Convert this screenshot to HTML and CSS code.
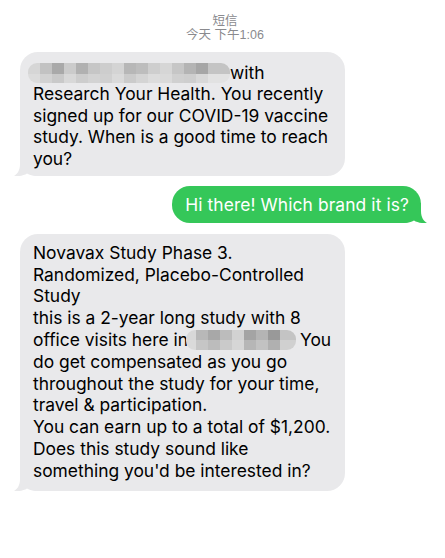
FILE: index.html
```html
<!doctype html>
<html>
    <head>
        <meta charset="utf-8">
        <link rel="stylesheet" href="styles.css">
    </head>
    <body>
        <div id="thread">
            <div class="stamp">
                <div>短信</div>
                <div>今天 下午1:06</div>
            </div>

            <!-- Incoming -->
            <div class="row in">
                <div class="bubble grey first">
                    <span class="redact redact-name"></span>with<br>
                    Research Your Health. You recently<br>
                    signed up for our COVID-19 vaccine<br>
                    study. When is a good time to reach<br>
                    you?
                    <svg class="tail" viewBox="0 0 24 20" width="24" height="20"><path d="M6 0 V8 C6 15 3 18 0 20 C5 20.5 10 19.5 13 17.5 C15.5 19 18.5 20 24 20 V0 Z"/></svg>
                </div>
            </div>

            <!-- Outgoing -->
            <div class="row out">
                <div class="bubble green">
                    Hi there! Which brand it is?
                    <svg class="tail" viewBox="0 0 24 20" width="24" height="20"><path d="M6 0 V8 C6 15 3 18 0 20 C5 20.5 10 19.5 13 17.5 C15.5 19 18.5 20 24 20 V0 Z"/></svg>
                </div>
            </div>

            <!-- Incoming -->
            <div class="row in">
                <div class="bubble grey">
                    Novavax Study Phase 3.<br>
                    Randomized, Placebo-Controlled<br>
                    Study<br>
                    this is a 2-year long study with 8<br>
                    office visits here in<span class="redact redact-city"></span>You<br>
                    do get compensated as you go<br>
                    throughout the study for your time,<br>
                    travel &amp; participation.<br>
                    You can earn up to a total of $1,200.<br>
                    Does this study sound like<br>
                    something you'd be interested in?
                    <svg class="tail" viewBox="0 0 24 20" width="24" height="20"><path d="M6 0 V8 C6 15 3 18 0 20 C5 20.5 10 19.5 13 17.5 C15.5 19 18.5 20 24 20 V0 Z"/></svg>
                </div>
            </div>
        </div>
    </body>
</html>
```

FILE: styles.css
```css
* {
    margin: 0;
    padding: 0;
    box-sizing: border-box;
}
body {
    background: #fff;
    font-family: Inter, "Liberation Sans", "Noto Sans CJK SC", sans-serif;
    color: #000;
}
#thread {
    display: flex;
    flex-direction: column;
    gap: 10px;
    padding: 14px 17px 0 20px;
}
.stamp {
    text-align: center;
    font-family: "Liberation Sans", "Noto Sans CJK SC", sans-serif;
    font-size: 12.5px;
    line-height: 14px;
    color: #8a8a8e;
    margin-left: 2px;
}
.row {
    display: flex;
}
.row.out {
    justify-content: flex-end;
    padding-right: 7px;
    margin-bottom: 1px;
}
.bubble {
    position: relative;
    isolation: isolate;
    font-size: 17.4px;
    line-height: 21.8px;
    padding: 8px 12px 9px 13px;
    border-radius: 18px;
    white-space: nowrap;
}
.grey {
    background: #e9e9eb;
    width: 325px;
}
.grey.first {
    line-height: 21.5px;
    padding-top: 9.5px;
    padding-bottom: 7px;
}
.green {
    background: #35c759;
    color: #fff;
    padding: 8px 12px 7px 13px;
    letter-spacing: 0.1px;
}
.tail {
    position: absolute;
    z-index: -1;
    bottom: 0;
    display: block;
}
.grey .tail {
    left: -6px;
    fill: #e9e9eb;
}
.green .tail {
    right: -6px;
    fill: #35c759;
    transform: scaleX(-1);
}
.redact {
    display: inline-block;
    height: 20px;
    vertical-align: -4px;
    border-radius: 9px;
    filter: blur(0.6px);
}
.redact-name {
    width: 202px;
    margin-left: -5px;
    background:
        linear-gradient(to right, #d6d6d6 0 12px, #c2c2c2 12px 24px, #a9a9a9 24px 36px, #cbcbcb 36px 48px, #b1b1b1 48px 60px, #c6c6c6 60px 72px, #cdcdcd 72px 84px, #d4d4d4 84px 96px, #b7b7b7 96px 108px, #bdbdbd 108px 120px, #cecece 120px 132px, #d6d6d6 132px 144px, #c6c6c6 144px 156px, #b4b4b4 156px 168px, #a6a6a6 168px 180px, #c4c4c4 180px 202px) top / 100% 55% no-repeat,
        linear-gradient(to right, #dcdcdc 0 12px, #d2d2d2 12px 24px, #c9c9c9 24px 36px, #d8d8d8 36px 48px, #cdcdcd 48px 60px, #d3d3d3 60px 72px, #d0d0d0 72px 84px, #dadada 84px 96px, #cbcbcb 96px 108px, #d4d4d4 108px 120px, #dcdcdc 120px 132px, #dadada 132px 144px, #d0d0d0 144px 156px, #cecece 156px 168px, #d8d8d8 168px 180px, #e2e2e2 180px 202px) bottom / 100% 45% no-repeat;
}
.redact-city {
    width: 110px;
    margin-left: -2px;
    margin-right: 4px;
    background:
        linear-gradient(to right, #d8d8d8 0 10px, #b8b8b8 10px 22px, #a8a8a8 22px 34px, #bcbcbc 34px 46px, #d2d2d2 46px 58px, #a4a4a4 58px 70px, #b4b4b4 70px 82px, #999 82px 94px, #c4c4c4 94px 110px) top / 100% 50% no-repeat,
        linear-gradient(to right, #dadada 0 10px, #c6c6c6 10px 22px, #bcbcbc 22px 34px, #cacaca 34px 46px, #d6d6d6 46px 58px, #b6b6b6 58px 70px, #c2c2c2 70px 82px, #b0b0b0 82px 94px, #d0d0d0 94px 110px) bottom / 100% 50% no-repeat;
}
```
